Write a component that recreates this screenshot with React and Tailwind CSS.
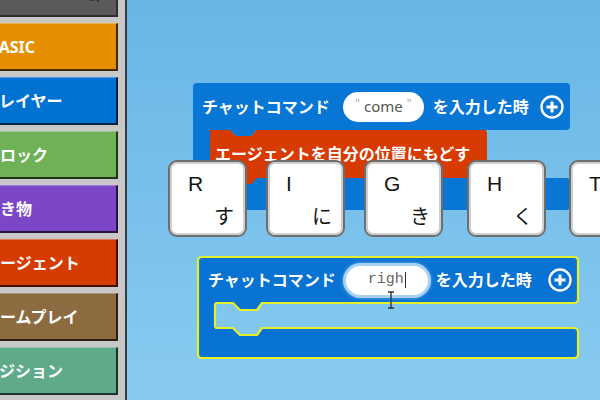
import { Search } from 'lucide-react';

const jp = { fontFamily: '"Noto Sans", "Noto Sans CJK JP", sans-serif' };

const categories = [
  { label: 'BASIC', bg: 'bg-[#e58f00]', shift: '-ml-[12px]' },
  { label: 'プレイヤー', bg: 'bg-[#0072d2]', shift: '-ml-[17px]' },
  { label: 'ブロック', bg: 'bg-[#6fb156]', shift: '-ml-[16px]' },
  { label: '生き物', bg: 'bg-[#7b47c8]', shift: '-ml-[16px]' },
  { label: 'エージェント', bg: 'bg-[#d53c02]', shift: '-ml-[16px]' },
  { label: 'ゲームプレイ', bg: 'bg-[#8b6b3f]', shift: '-ml-[16px]' },
  { label: 'ポジション', bg: 'bg-[#5fab89]', shift: '-ml-[17px]' },
];

const keys = [
  { letter: 'R', kana: 'す', gap: 'ml-0' },
  { letter: 'I', kana: 'に', gap: 'ml-[19px]' },
  { letter: 'G', kana: 'き', gap: 'ml-[19px]' },
  { letter: 'H', kana: 'く', gap: 'ml-[24px]' },
  { letter: 'T', kana: 'か', gap: 'ml-[23px]' },
];

function PlusCircle() {
  return (
    <svg width="24" height="24" viewBox="0 0 24 24" className="shrink-0">
      <circle cx="12" cy="12" r="10.5" fill="none" stroke="white" strokeWidth="2.4" />
      <path d="M12 6.5V17.5M6.5 12H17.5" stroke="white" strokeWidth="3" />
    </svg>
  );
}

function Sidebar() {
  return (
    <div className="w-[127px] h-full shrink-0 bg-[#c8c8c8] border-r-2 border-[#3a3a3a] overflow-hidden">
      <div className="flex flex-col gap-[6px] -mt-[31px]">
        <div className="relative w-[118px] h-[48px] bg-[#5a5a5a] border-r-2 border-b-2 border-[#2e2e2e]">
          <Search className="absolute right-[16px] bottom-[12px] w-[14px] h-[14px] text-[#333]" strokeWidth={3} />
        </div>
        {categories.map((c) => (
          <div
            key={c.label}
            className={`w-[118px] h-[48px] ${c.bg} border-t border-white/30 border-r-2 border-b-2 border-r-black/70 border-b-black/70 flex items-center overflow-hidden`}
          >
            <span className={`${c.shift} text-white text-[16px] font-bold whitespace-nowrap`} style={jp}>
              {c.label}
            </span>
          </div>
        ))}
      </div>
    </div>
  );
}

// "come" chat command block with the agent statement inside
function ComeBlock() {
  return (
    <div className="absolute left-[66px] top-[83px] w-[377px] h-[127px]" style={jp}>
      <svg className="absolute inset-0" width="377" height="127" viewBox="0 0 377 127">
        <path
          d="M4 0H373Q377 0 377 4V43Q377 47 373 47H64L58 53H43L37 47H17V95H373Q377 95 377 99V123Q377 127 373 127H4Q0 127 0 123V4Q0 0 4 0Z"
          fill="#0876d4"
        />
        <path
          d="M17 47H37L43 53H58L64 47H291Q294 47 294 50V92Q294 95 291 95H64L58 101H43L37 95H17Z"
          fill="#d83b01"
        />
      </svg>
      <div className="relative flex flex-col">
        <div className="h-[47px] flex items-center pl-[9px] text-white text-[16px] font-bold whitespace-nowrap">
          <span>チャットコマンド</span>
          <div className="ml-[13px] w-[81px] h-[30px] rounded-full bg-white flex items-center justify-center gap-[4px] text-[15px] font-normal">
            <span className="text-[#aaa] text-[12px] -mt-[6px]">"</span>
            <span className="text-[#555]">come</span>
            <span className="text-[#aaa] text-[12px] -mt-[6px]">"</span>
          </div>
          <span className="ml-[9px]">を入力した時</span>
          <span className="ml-[11px]">
            <PlusCircle />
          </span>
        </div>
        <div className="h-[48px] flex items-center pl-[22px] text-white text-[16px] font-bold whitespace-nowrap">
          エージェントを自分の位置にもどす
        </div>
      </div>
    </div>
  );
}

// selected, empty chat command block being edited
function EditBlock() {
  return (
    <div className="absolute left-[71px] top-[257px] w-[380px] h-[101px]" style={jp}>
      <svg className="absolute -left-[2px] -top-[2px]" width="384" height="105" viewBox="-2 -2 384 105">
        <path
          d="M4 0H376Q380 0 380 4V42Q380 46 376 46H64L59 53H42L35 46H19Q17 46 17 48V69Q17 71 19 71H35L42 78H59L64 71H376Q380 71 380 75V97Q380 101 376 101H4Q0 101 0 97V4Q0 0 4 0Z"
          fill="#0873d2"
          stroke="#e4ef2a"
          strokeWidth="2.2"
          strokeLinejoin="round"
        />
      </svg>
      <div className="relative h-[46px] flex items-center pl-[10px] text-white text-[16px] font-bold whitespace-nowrap">
        <span>チャットコマンド</span>
        <div className="relative ml-[10px] w-[82px] h-[29px] rounded-full bg-white ring-[3px] ring-[#a9d2f2] shadow-[0_0_4px_2px_rgba(200,230,255,0.8)] flex items-center justify-center">
          <span className="text-[#666] text-[15px] font-normal" style={{ fontFamily: '"Liberation Mono", monospace' }}>
            righ
          </span>
          <span className="w-px h-[16px] bg-[#333] ml-px" />
          <svg className="absolute left-[41px] top-[25px]" width="8" height="18" viewBox="0 0 8 18">
            <path d="M1 1H7M4 1V17M1 17H7" stroke="#333" strokeWidth="1.4" fill="none" />
          </svg>
        </div>
        <span className="ml-[8px]">を入力した時</span>
        <span className="ml-[16px]">
          <PlusCircle />
        </span>
      </div>
    </div>
  );
}

function KeyRow() {
  return (
    <div className="absolute left-[41px] top-[160px] flex">
      {keys.map((k) => (
        <div
          key={k.letter}
          className={`${k.gap} shrink-0 w-[79px] h-[77px] rounded-[9px] bg-white border-2 border-[#6e6e6e] shadow-[inset_0_0_0_2px_#cfcfcf] flex flex-col justify-between px-[11px] pt-[11px] pb-[8px] text-[#151515]`}
          style={{ fontFamily: '"Liberation Sans", "Noto Sans CJK JP", sans-serif' }}
        >
          <span className="pl-[7px] text-[21px] leading-none">{k.letter}</span>
          <span className="self-end text-[20px] leading-none">{k.kana}</span>
        </div>
      ))}
    </div>
  );
}

export default function App() {
  return (
    <div className="w-[600px] h-[400px] flex overflow-hidden">
      <Sidebar />
      <div className="relative flex-1 h-full bg-gradient-to-b from-[#68b6e6] to-[#88cbf0] overflow-hidden">
        <ComeBlock />
        <KeyRow />
        <EditBlock />
      </div>
    </div>
  );
}
